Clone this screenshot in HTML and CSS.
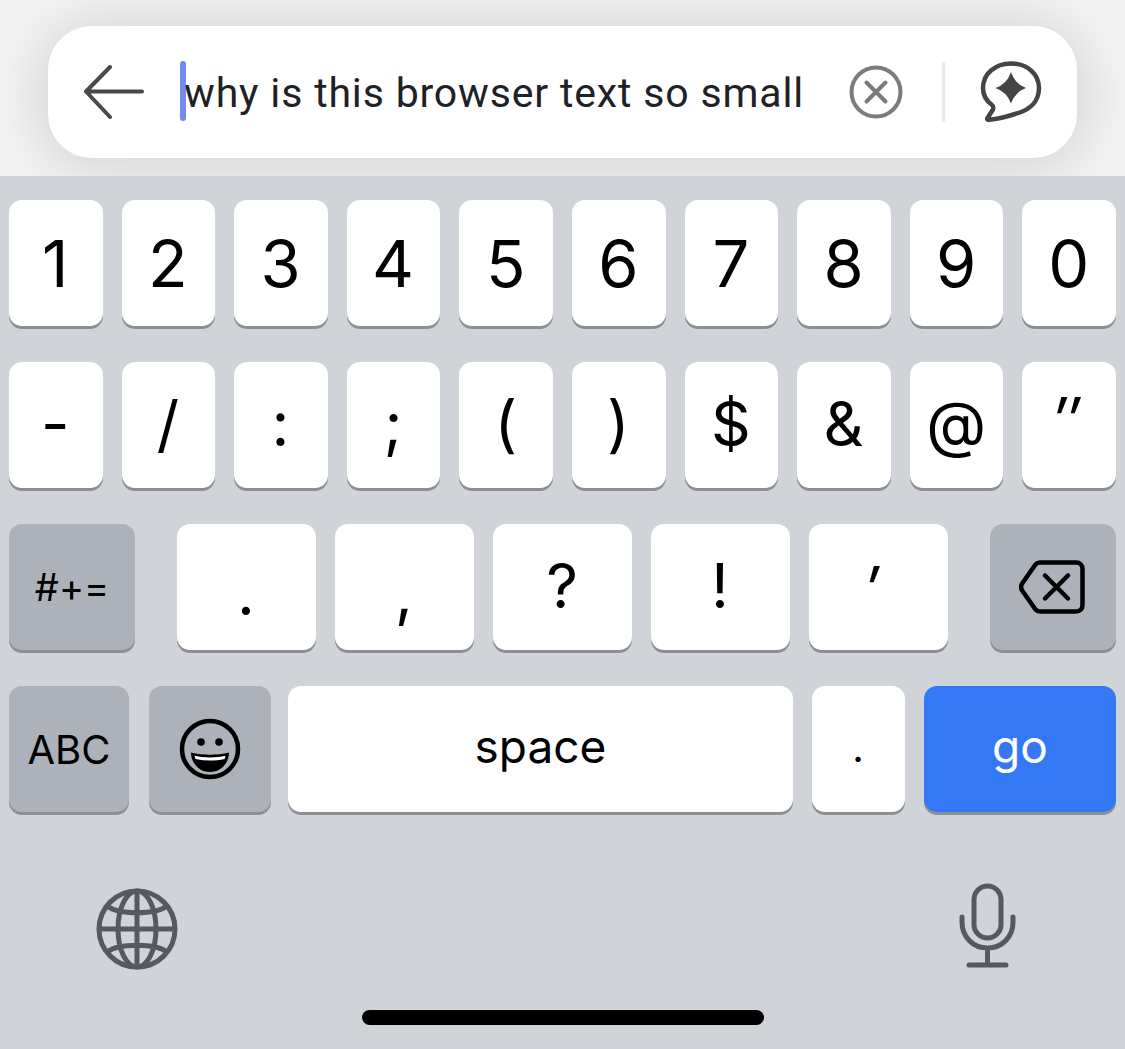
FILE: index.html
```html
<!DOCTYPE html>
<html lang="en">
<head>
<meta charset="utf-8">
<title>Search keyboard</title>
<link rel="stylesheet" href="styles.css">
</head>
<body>
<header class="top">
  <div class="pill">
    <svg class="ic-back" width="60" height="54" viewBox="0 0 60 54"><path d="M58 26.500H2M26 2 2 26.500 26 52" fill="none" stroke="#4a4a4a" stroke-width="4" stroke-linecap="round" stroke-linejoin="round"/></svg>
    <div class="query"><span class="caret"></span>why is this browser text so small</div>
    <svg class="ic-clear" width="54" height="54" viewBox="0 0 54 54"><circle cx="27" cy="27" r="24.500" fill="none" stroke="#7b7b7b" stroke-width="4"/><path d="M17.500 17.500 36.500 36.500M36.500 17.500 17.500 36.500" fill="none" stroke="#7b7b7b" stroke-width="4" stroke-linecap="round"/></svg>
    <span class="divider"></span>
    <svg class="ic-chat" width="62" height="62" viewBox="0 0 62 62"><path d="M31 2.500C15 2.500 3 13 3 27c0 7 3.500 13 9 17 1.500 1 1.500 2.500 1 4.500L7.500 57c-.8 1.300 0 2 1.500 1.800 8-.8 17-2.800 26-5.800C49 49.500 59 41 59 27 59 13 47 2.500 31 2.500Z" fill="none" stroke="#454545" stroke-width="4.500" stroke-linejoin="round"/><path d="M31 11Q35 23 46 27 35 31 31 42.500 27 31 15.500 27 27 23 31 11Z" fill="#454545"/></svg>
  </div>
</header>
<main class="kb">
  <div class="row row-ten">
    <button class="key">1</button><button class="key">2</button><button class="key">3</button><button class="key">4</button><button class="key">5</button><button class="key">6</button><button class="key">7</button><button class="key">8</button><button class="key">9</button><button class="key">0</button>
  </div>
  <div class="row row-ten">
    <button class="key sym">-</button><button class="key sym">/</button><button class="key sym">:</button><button class="key sym">;</button><button class="key sym">(</button><button class="key sym">)</button><button class="key sym">$</button><button class="key sym">&amp;</button><button class="key sym">@</button><button class="key sym quote quote-double">″</button>
  </div>
  <div class="row row-three">
    <button class="key dark small w-side">#+=</button>
    <div class="punct">
      <button class="key sym low">.</button><button class="key sym low">,</button><button class="key sym">?</button><button class="key sym">!</button><button class="key sym quote quote-single">′</button>
    </div>
    <button class="key dark w-side" aria-label="delete">
      <svg class="ic-del" width="66" height="54" viewBox="0 0 66 54"><path d="M21 2.500H57c4 0 6.500 2.500 6.500 6.500V45c0 4-2.500 6.500-6.500 6.500H21c-2 0-3.300-.6-4.500-2L3.500 31c-1.800-2.500-1.800-5.500 0-8L16.500 4.500c1.200-1.400 2.500-2 4.500-2Z" fill="none" stroke="#000" stroke-width="4.500" stroke-linejoin="round"/><path d="M26 15.500 49 38.500M49 15.500 26 38.500" fill="none" stroke="#000" stroke-width="4.500" stroke-linecap="round"/></svg>
    </button>
  </div>
  <div class="row row-four">
    <button class="key dark abc">ABC</button>
    <button class="key dark emoji" aria-label="emoji">
      <svg width="62" height="62" viewBox="0 0 62 62"><circle cx="31" cy="31" r="28" fill="none" stroke="#000" stroke-width="4.500"/><circle cx="22" cy="24" r="3.800"/><circle cx="40" cy="24" r="3.800"/><path d="M12 34.500C24 37.500 38 37.500 50 34.500 50 45 42 54 31 54 20 54 12 45 12 34.500Z"/><path d="M15.500 37.800C25 40 37 40 46.500 37.800 46.300 39 46 40 45.500 41 36 43 26 43 16.500 41 16 40 15.700 39 15.500 37.800Z" fill="#fff"/></svg>
    </button>
    <button class="key word space">space</button>
    <button class="key sym period">.</button>
    <button class="key word go">go</button>
  </div>
  <div class="tools">
    <svg class="ic-globe" width="82" height="82" viewBox="0 0 82 82"><g fill="none" stroke="#555a60" stroke-width="5"><circle cx="41" cy="41" r="38"/><ellipse cx="41" cy="41" rx="19" ry="38"/><path d="M41 3V79M3 41H79M11 18C23 27 59 27 71 18M11 64C23 55 59 55 71 64"/></g></svg>
    <svg width="60" height="88" viewBox="0 0 60 88"><g fill="none" stroke="#555a60" stroke-width="5" stroke-linecap="round"><rect x="16" y="3" width="27" height="52" rx="13.500"/><path d="M4 34V39C4 54 15 65 29.500 65S55 54 55 39V34M29.500 65V82M11 82H48"/></g></svg>
  </div>
  <div class="home"></div>
</main>
</body>
</html>
```
FILE: styles.css
```css
* { box-sizing: border-box; }
html, body { margin: 0; padding: 0; }
body {
  width: 1125px;
  height: 1049px;
  overflow: hidden;
  background: #d0d3d8;
  font-family: Inter, "Liberation Sans", sans-serif;
}
.top {
  height: 176px;
  padding: 26px 48px 18px;
  background: #f3f3f3;
  overflow: hidden;
}
.pill {
  height: 132px;
  border-radius: 44px;
  background: #fff;
  box-shadow: 0 4px 60px 8px rgba(0, 0, 0, .13);
  display: flex;
  align-items: center;
  padding-left: 36px;
}
.ic-back { flex: none; }
.query {
  position: relative;
  margin-left: 40px;
  width: 625px;
  flex: none;
  font-family: Roboto, sans-serif;
  font-size: 41px;
  letter-spacing: .84px;
  color: #202124;
  white-space: nowrap;
  padding-top: 1px;
}
.caret {
  position: absolute;
  left: -4px;
  top: -7px;
  width: 6px;
  height: 60px;
  border-radius: 3px;
  background: rgba(90, 120, 230, .85);
}
.ic-clear { flex: none; margin-left: 40px; }
.divider { flex: none; width: 3px; height: 60px; margin-left: 39px; background: #e9e9e9; }
.ic-chat { flex: none; margin-left: 35px; }
.kb { padding: 24px 9px 0; }
.row { display: flex; height: 126px; margin-bottom: 36px; }
.row-ten { justify-content: space-between; }
.key {
  flex: none;
  height: 126px;
  padding: 0 1px 0 0;
  border: 0;
  border-radius: 13px;
  background: #fff;
  box-shadow: 0 3px 0 #8e8f94;
  color: #000;
  font-family: Inter, "Liberation Sans", sans-serif;
  font-size: 65px;
  font-weight: 400;
  display: flex;
  align-items: center;
  justify-content: center;
}
.row-ten .key { width: 93.500px; }
.sym { font-size: 62px; padding-bottom: 4px; }
.quote { font-size: 62px; font-style: italic; align-items: flex-start; }
.quote-double { padding-top: 20px; padding-right: 7px; }
.quote-single { padding-top: 27px; padding-right: 14px; }
.low { align-items: flex-end; padding-bottom: 20px; }
.dark { background: #adb1b9; }
.row-three { justify-content: space-between; }
.w-side { width: 126px; padding-right: 0; }
.small { font-size: 38px; padding-bottom: 0; }
.punct { display: flex; gap: 19px; margin-left: 42px; margin-right: 42px; }
.punct .key { width: 139px; }
.ic-del { margin-left: -2px; }
.row-four { gap: 19px; }
.abc { width: 120px; font-size: 40px; margin-right: 1px; padding-right: 0; }
.emoji { width: 122px; margin-right: -2px; padding-right: 1px; }
.space { width: 505px; padding-right: 0; }
.word { font-size: 46px; padding-bottom: 6px; }
.period { width: 93px; align-items: flex-end; padding-bottom: 40px; font-size: 40px; }
.go { width: 192px; background: #3478f6; color: #fff; padding-right: 0; }
.tools {
  display: flex;
  justify-content: space-between;
  padding: 35px 98px 0 87px;
  height: 162px;
  align-items: flex-start;
  margin-top: 2px;
}
.ic-globe { margin-top: 5px; }
.home {
  width: 402px;
  height: 15px;
  margin: 0 0 0 353px;
  border-radius: 8px;
  background: #000;
}
```
